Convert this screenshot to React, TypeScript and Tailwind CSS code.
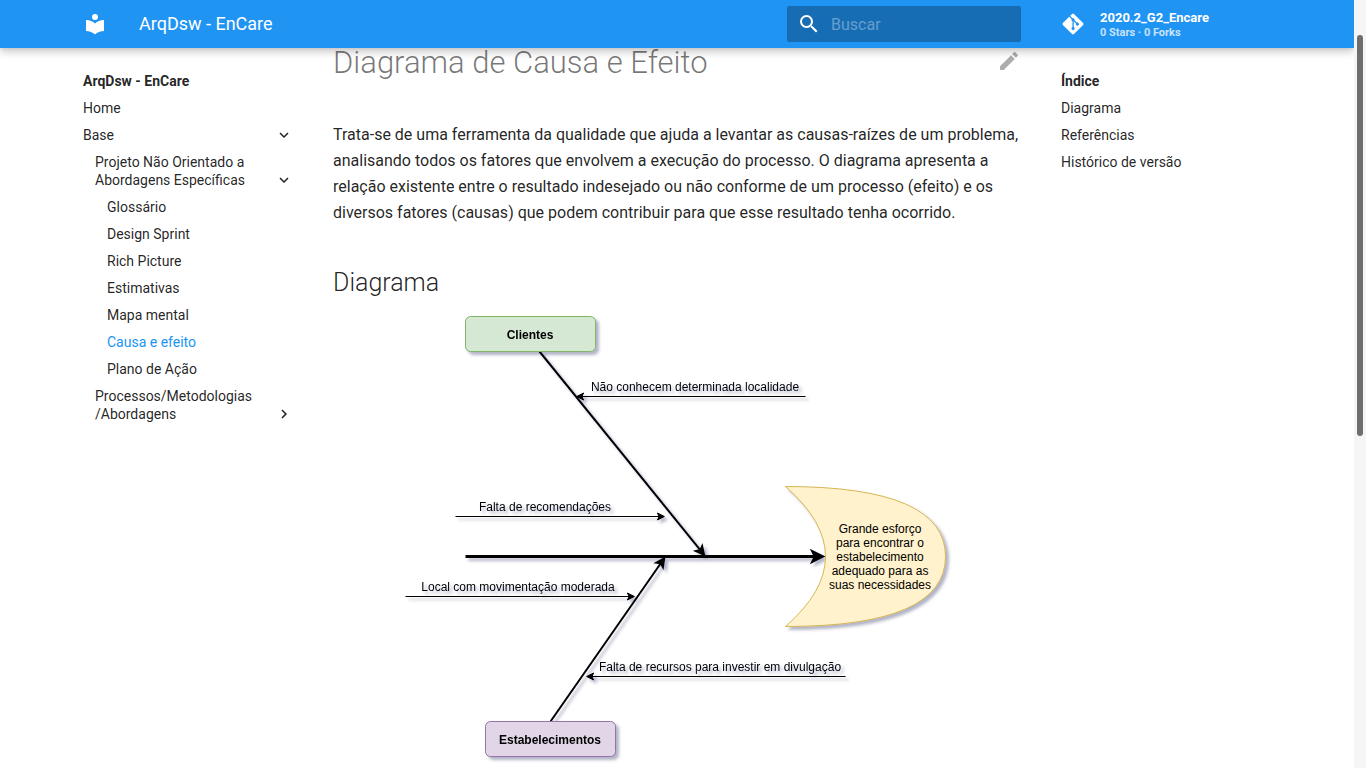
import React from "react";
import { FaGitAlt } from "react-icons/fa";

const LIBRARY =
  "M12 8a3 3 0 003-3 3 3 0 00-3-3 3 3 0 00-3 3 3 3 0 003 3m0 3.54C9.64 9.35 6.5 8 3 8v11c3.5 0 6.64 1.35 9 3.54 2.36-2.19 5.5-3.54 9-3.54V8c-3.5 0-6.64 1.35-9 3.54z";
const MAGNIFY =
  "M9.5 3A6.5 6.5 0 0116 9.5c0 1.61-.59 3.09-1.56 4.23l.27.27h.79l5 5-1.5 1.5-5-5v-.79l-.27-.27A6.516 6.516 0 019.5 16 6.5 6.5 0 013 9.5 6.5 6.5 0 019.5 3m0 2C7 5 5 7 5 9.5S7 14 9.5 14 14 12 14 9.5 12 5 9.5 5z";
const PENCIL =
  "M20.71 7.04c.39-.39.39-1.04 0-1.41l-2.34-2.34c-.37-.39-1.02-.39-1.41 0l-1.84 1.83 3.75 3.75M3 17.25V21h3.75L17.81 9.93l-3.75-3.75L3 17.25z";
const CHEVRON_RIGHT = "M8.59 16.58L13.17 12 8.59 7.41 10 6l6 6-6 6-1.41-1.42z";
const CHEVRON_DOWN = "M7.41 8.59L12 13.17l4.59-4.58L18 10l-6 6-6-6 1.41-1.41z";

function Icon({ path, className }: { path: string; className: string }) {
  return (
    <svg viewBox="0 0 24 24" className={className} fill="currentColor" aria-hidden="true">
      <path d={path} />
    </svg>
  );
}

function Header() {
  return (
    <header className="relative z-10 shrink-0 bg-[#2094f3] text-white shadow-[0_0_4px_rgba(0,0,0,0.1),0_4px_8px_rgba(0,0,0,0.2)]">
      <div className="mx-auto flex h-12 max-w-[1220px] items-center">
        <a href="#home" aria-label="ArqDsw - EnCare" className="ml-4">
          <Icon path={LIBRARY} className="size-6" />
        </a>
        <span className="ml-8 flex-1 text-lg">ArqDsw - EnCare</span>
        <form className="flex h-9 w-[234px] items-center gap-2.5 rounded-xs bg-black/26 px-2.5">
          <label htmlFor="search">
            <Icon path={MAGNIFY} className="size-6" />
          </label>
          <input
            id="search"
            type="text"
            aria-label="Buscar"
            placeholder="Buscar"
            className="h-full min-w-0 flex-1 bg-transparent text-base outline-none placeholder:text-white/35"
          />
        </form>
        <a href="#repo" className="ml-10 flex w-[226px] items-center gap-[15px]">
          <FaGitAlt className="size-6" />
          <span className="flex flex-col pt-0.5 font-bold">
            <span className="text-[13px] leading-4">2020.2_G2_Encare</span>
            <span className="text-[11px] leading-[14px] text-white/75">0 Stars · 0 Forks</span>
          </span>
        </a>
      </div>
    </header>
  );
}

function NavLink({ label, active }: { label: string; active?: boolean }) {
  return (
    <li>
      <a href="#page" className={active ? "text-[#2094f3]" : ""}>
        {label}
      </a>
    </li>
  );
}

function NavToggle({ label, open }: { label: React.ReactNode; open?: boolean }) {
  return (
    <button type="button" aria-expanded={!!open} className="flex w-full items-end justify-between text-left">
      <span>{label}</span>
      <Icon path={open ? CHEVRON_DOWN : CHEVRON_RIGHT} className="size-[18px] shrink-0" />
    </button>
  );
}

const PAGES = ["Glossário", "Design Sprint", "Rich Picture", "Estimativas", "Mapa mental", "Causa e efeito", "Plano de Ação"];

function Sidebar() {
  return (
    <nav aria-label="ArqDsw - EnCare" className="w-[242px] shrink-0 px-4 pt-6 text-sm leading-[18px]">
      <h2 className="font-bold">ArqDsw - EnCare</h2>
      <ul className="mt-[9px] flex flex-col gap-[9px]">
        <NavLink label="Home" />
        <li className="flex flex-col gap-[9px]">
          <NavToggle label="Base" open />
          <ul className="flex flex-col gap-[9px] pl-3">
            <li className="flex flex-col gap-[9px]">
              <NavToggle
                open
                label={
                  <>
                    Projeto Não Orientado a<br />
                    Abordagens Específicas
                  </>
                }
              />
              <ul className="flex flex-col gap-[9px] pl-3">
                {PAGES.map((page) => (
                  <NavLink key={page} label={page} active={page === "Causa e efeito"} />
                ))}
              </ul>
            </li>
            <li>
              <NavToggle
                label={
                  <>
                    Processos/Metodologias
                    <br />
                    /Abordagens
                  </>
                }
              />
            </li>
          </ul>
        </li>
      </ul>
    </nav>
  );
}

type ArrowProps = { from: [number, number]; to: [number, number]; width: number };

function Arrow({ from, to, width }: ArrowProps) {
  const dx = to[0] - from[0];
  const dy = to[1] - from[1];
  const length = Math.hypot(dx, dy);
  const ux = dx / length;
  const uy = dy / length;
  const tipX = to[0] - ux * width * 1.118;
  const tipY = to[1] - uy * width * 1.118;
  const hx = ux * (6 + width);
  const hy = uy * (6 + width);
  const notchX = tipX - hx * 0.75;
  const notchY = tipY - hy * 0.75;
  const head = `M${tipX} ${tipY}L${tipX - hx - hy / 2} ${tipY - hy + hx / 2}L${notchX} ${notchY}L${tipX - hx + hy / 2} ${tipY - hy - hx / 2}Z`;
  return (
    <g stroke="#000" strokeWidth={width} strokeMiterlimit={10}>
      <path d={`M${from[0]} ${from[1]}L${notchX} ${notchY}`} fill="none" />
      <path d={head} />
    </g>
  );
}

const EFFECT = ["Grande esforço", "para encontrar o", "estabelecimento", "adequado para as", "suas necessidades"];

function Fishbone() {
  return (
    <svg
      viewBox="401 311 552 460"
      className="mx-auto mt-3 block w-[552px] max-w-full font-['Liberation_Sans',Arial,sans-serif] text-[12px]"
      role="img"
      aria-label="Diagrama de causa e efeito"
    >
      <defs>
        <filter id="shadow" x="-5%" y="-5%" width="110%" height="110%">
          <feDropShadow dx="3" dy="3" stdDeviation="1.7" floodColor="#3D4574" floodOpacity="0.4" />
        </filter>
      </defs>
      <g filter="url(#shadow)">
        <g transform="translate(.5 .5)">
          <Arrow from={[465, 556]} to={[825, 556]} width={3} />
          <Arrow from={[539, 351]} to={[705, 556]} width={2} />
          <Arrow from={[550, 721]} to={[665, 556]} width={2} />
          <Arrow from={[805, 396]} to={[575, 396]} width={1} />
          <Arrow from={[455, 516]} to={[665, 516]} width={1} />
          <Arrow from={[405, 596]} to={[635, 596]} width={1} />
          <Arrow from={[845, 676]} to={[585, 676]} width={1} />
          <rect x="465" y="316" width="130" height="35" rx="5" fill="#d5e8d4" stroke="#82b366" />
          <rect x="485" y="721" width="130" height="35" rx="5" fill="#e1d5e7" stroke="#9673a6" />
          <path
            d="M785 486Q945 486 945 556Q945 626 785 626Q865 556 785 486Z"
            fill="#fff2cc"
            stroke="#d6b656"
            strokeMiterlimit="10"
          />
        </g>
        <g textAnchor="middle">
          <text x="530" y="339" fontWeight="bold">Clientes</text>
          <text x="550" y="744" fontWeight="bold">Estabelecimentos</text>
          <text x="695" y="391">Não conhecem determinada localidade</text>
          <text x="545" y="511">Falta de recomendações</text>
          <text x="518" y="591">Local com movimentação moderada</text>
          <text x="720" y="671">Falta de recursos para investir em divulgação</text>
        </g>
      </g>
      <g textAnchor="middle">
        {EFFECT.map((line, i) => (
          <text key={line} x="880" y={533 + i * 14}>
            {line}
          </text>
        ))}
      </g>
    </svg>
  );
}

function Article() {
  return (
    <main className="mx-6 min-w-0 flex-1">
      <div className="flex items-end justify-between">
        <h1 className="text-[31px] leading-[30px] font-light text-black/54">Diagrama de Causa e Efeito</h1>
        <a href="#edit" aria-label="Editar esta página" className="mb-[5px] text-black/32">
          <Icon path={PENCIL} className="size-6" />
        </a>
      </div>
      <p className="mt-11 text-base leading-[26px]">
        Trata-se de uma ferramenta da qualidade que ajuda a levantar as causas-raízes de um problema, analisando todos
        os fatores que envolvem a execução do processo. O diagrama apresenta a relação existente entre o resultado
        indesejado ou não conforme de um processo (efeito) e os diversos fatores (causas) que podem contribuir para que
        esse resultado tenha ocorrido.
      </p>
      <h2 className="mt-[41px] text-[25px] leading-8 font-light">Diagrama</h2>
      <Fishbone />
    </main>
  );
}

function Toc() {
  return (
    <nav aria-label="Índice" className="w-[242px] shrink-0 px-4 pt-6 text-sm leading-[18px]">
      <h2 className="font-bold">Índice</h2>
      <ul className="mt-[9px] flex flex-col gap-[9px]">
        <NavLink label="Diagrama" />
        <NavLink label="Referências" />
        <NavLink label="Histórico de versão" />
      </ul>
    </nav>
  );
}

export default function App() {
  return (
    <div className="flex h-screen overflow-hidden bg-white font-[Roboto,sans-serif] text-black/87">
      <div className="flex min-w-0 flex-1 flex-col">
        <Header />
        <div className="mx-auto flex min-h-0 w-full max-w-[1220px] flex-1 items-start">
          <Sidebar />
          <Article />
          <Toc />
        </div>
      </div>
      <div className="relative z-20 w-3 shrink-0 bg-[#f5f5f5] px-[3px] pt-[35px]" aria-hidden="true">
        <div className="h-[401px] rounded-full bg-[#6e6e6e]" />
      </div>
    </div>
  );
}
